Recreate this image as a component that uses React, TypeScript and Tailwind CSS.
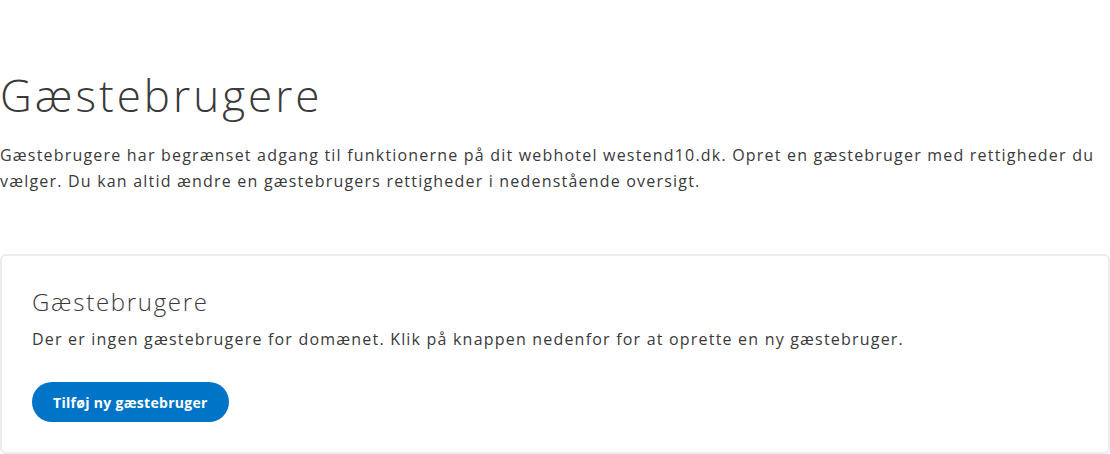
import React from "react";

export default function App() {
  return (
    <div className="w-[1110px] h-[454px] bg-white text-[#3a3a3a]" style={{ fontFamily: '"Open Sans", "Liberation Sans", sans-serif' }}>
      <div className="pt-[65px]">
        <h1 className="text-[44px] leading-[60px] font-light tracking-[3px] text-[#3a3a3a]">Gæstebrugere</h1>
        <p className="mt-[17px] text-[16px] leading-[26px] tracking-[1.2px] pr-[2px]">
          Gæstebrugere har begrænset adgang til funktionerne på dit webhotel westend10.dk. Opret en gæstebruger med rettigheder du vælger. Du kan altid ændre en gæstebrugers rettigheder i nedenstående oversigt.
        </p>
      </div>
      <div className="mt-[60px] mx-0 border-2 border-[#ececec] rounded-[6px] px-[30px] pt-[30px] pb-[30px]">
        <h2 className="text-[24px] leading-[32px] font-light tracking-[1.7px]">Gæstebrugere</h2>
        <p className="mt-[8px] text-[16px] leading-[26px] tracking-[1.2px]">
          Der er ingen gæstebrugere for domænet. Klik på knappen nedenfor for at oprette en ny gæstebruger.
        </p>
        <button className="mt-[30px] h-[40px] px-[21px] rounded-full bg-[#0074c7] text-white text-[14px] font-bold tracking-[0.3px]">
          Tilføj ny gæstebruger
        </button>
      </div>
    </div>
  );
}
